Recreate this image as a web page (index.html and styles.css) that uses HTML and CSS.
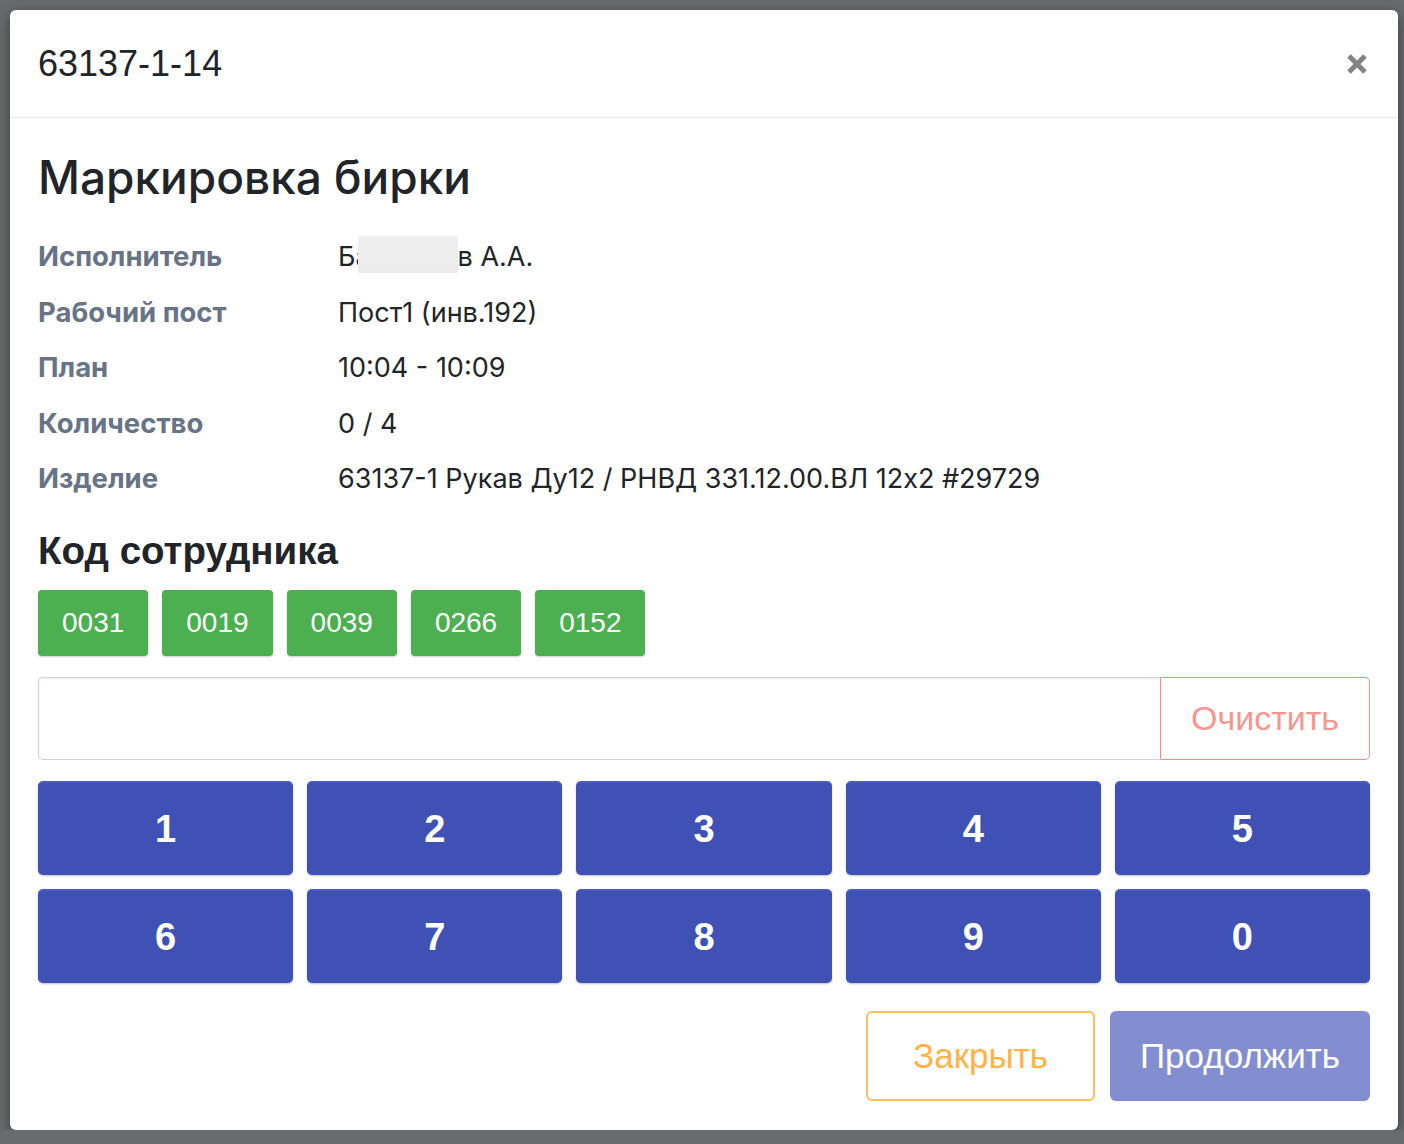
FILE: index.html
```html
<!DOCTYPE html>
<html>
<head>
  <meta charset="UTF-8">
  <meta name="viewport" content="width=device-width, initial-scale=1">
  <title>63137-1-14</title>
  <link rel="stylesheet" href="styles.css">
</head>
<body>
  <div class="modal">
    <div class="modal-header">
      <h5 class="modal-title">63137-1-14</h5>
      <button class="close" aria-label="Закрыть">
        <svg width="22" height="22" viewBox="0 0 22 22">
          <path d="M3 3 L19 19 M19 3 L3 19" stroke="#838383" stroke-width="5" stroke-linecap="butt"/>
        </svg>
      </button>
    </div>

    <div class="modal-body">
      <h2 class="task-title">Маркировка бирки</h2>

      <!-- Task details -->
      <div class="details">
        <div class="label">Исполнитель</div>
        <div class="value">Ба<span class="hidden-name"></span>в А.А.</div>
        <div class="label">Рабочий пост</div>
        <div class="value">Пост1 (инв.192)</div>
        <div class="label">План</div>
        <div class="value">10:04 - 10:09</div>
        <div class="label">Количество</div>
        <div class="value">0 / 4</div>
        <div class="label">Изделие</div>
        <div class="value">63137-1 Рукав Ду12 / РНВД 331.12.00.ВЛ 12х2 #29729</div>
      </div>

      <h3 class="section-title">Код сотрудника</h3>

      <!-- Recent employee codes -->
      <div class="recent-codes">
        <button class="btn-code">0031</button>
        <button class="btn-code">0019</button>
        <button class="btn-code">0039</button>
        <button class="btn-code">0266</button>
        <button class="btn-code">0152</button>
      </div>

      <div class="input-group">
        <input type="text" id="codeInput">
        <button class="btn-clear" disabled>Очистить</button>
      </div>

      <!-- Numeric keypad -->
      <div class="keypad">
        <button class="key">1</button>
        <button class="key">2</button>
        <button class="key">3</button>
        <button class="key">4</button>
        <button class="key">5</button>
        <button class="key">6</button>
        <button class="key">7</button>
        <button class="key">8</button>
        <button class="key">9</button>
        <button class="key">0</button>
      </div>

      <div class="modal-footer">
        <button class="btn-close">Закрыть</button>
        <button class="btn-continue" disabled>Продолжить</button>
      </div>
    </div>
  </div>
</body>
</html>
```

FILE: styles.css
```css
/* Backdrop */
body {
  margin: 0;
  background: #6a6b6c;
  font-family: 'Liberation Sans', Arial, sans-serif;
  color: #212529;
}
button {
  font-family: 'Liberation Sans', Arial, sans-serif;
  cursor: pointer;
}
/* Modal window */
.modal {
  margin: 10px 6px 0 10px;
  width: 1388px;
  background: #fff;
  border-radius: 6px;
  box-shadow: 0 4px 14px rgba(0,0,0,0.45);
}
.modal-header {
  height: 107px;
  padding: 0 30px 0 28px;
  display: flex;
  align-items: center;
  justify-content: space-between;
  border-bottom: 1px solid #e9ecef;
}
.modal-title {
  margin: 0;
  font-size: 36px;
  font-weight: 400;
  line-height: 42px;
  color: #212529;
}
.close {
  border: none;
  background: none;
  padding: 0;
  width: 22px;
  height: 22px;
  display: flex;
}
.modal-body {
  padding: 30px 28px 29px;
}
.task-title {
  margin: 0 0 23px;
  font-family: 'Inter', 'Noto Sans', sans-serif;
  font-size: 46px;
  font-weight: 500;
  line-height: 58px;
  color: #212529;
}
/* Details table */
.details {
  display: grid;
  grid-template-columns: 300px 1fr;
  font-family: 'Inter', 'Noto Sans', sans-serif;
  font-size: 27px;
  line-height: 55.5px;
}
.label {
  font-weight: 700;
  font-size: 27.5px;
  color: #687386;
}
.value {
  color: #212529;
}
.hidden-name {
  display: inline-block;
  width: 100px;
  height: 37px;
  margin-left: -13px;
  vertical-align: -7px;
  background: linear-gradient(180deg, #efefef, #ebebeb);
}
.section-title {
  margin: 23px 0 18.5px;
  font-size: 38.5px;
  font-weight: 700;
  line-height: 42px;
  color: #212529;
}
/* Recent codes */
.recent-codes {
  display: flex;
  gap: 14px;
}
.btn-code {
  height: 66px;
  padding: 0 24px;
  border: none;
  border-radius: 4px;
  background: #4caf50;
  color: #fff;
  font-size: 28px;
  box-shadow: 0 1px 2px rgba(0,0,0,0.2);
}
/* Code input */
.input-group {
  display: flex;
  margin-top: 21px;
  height: 83px;
}
.input-group input {
  flex: 1;
  min-width: 0;
  border: 1px solid #ced4da;
  border-right: none;
  border-radius: 5px 0 0 5px;
  font-size: 30px;
  padding: 0 16px;
  box-shadow: inset 0 1px 2px rgba(0,0,0,0.08);
}
.btn-clear {
  width: 210px;
  background: #fff;
  border: 1px solid #f59089;
  border-radius: 0 5px 5px 0;
  color: #f6968f;
  font-size: 34px;
}
/* Keypad */
.keypad {
  display: grid;
  grid-template-columns: repeat(5, 1fr);
  gap: 14px;
  margin-top: 21px;
}
.key {
  height: 94px;
  border: none;
  border-top: 2px solid #4a5cc0;
  border-radius: 5px;
  background: #3f51b5;
  color: #fff;
  font-size: 38px;
  font-weight: 700;
  box-shadow: 0 1px 2px rgba(0,0,0,0.25);
}
/* Footer buttons */
.modal-footer {
  display: flex;
  justify-content: flex-end;
  gap: 15px;
  margin-top: 28px;
}
.btn-close {
  width: 229px;
  height: 90px;
  background: #fff;
  border: 2px solid #ffbd5c;
  border-radius: 6px;
  color: #ffb347;
  font-size: 35px;
}
.btn-continue {
  width: 260px;
  height: 90px;
  border: none;
  border-radius: 6px;
  background: #828ecf;
  color: #fff;
  font-size: 35px;
}
```
